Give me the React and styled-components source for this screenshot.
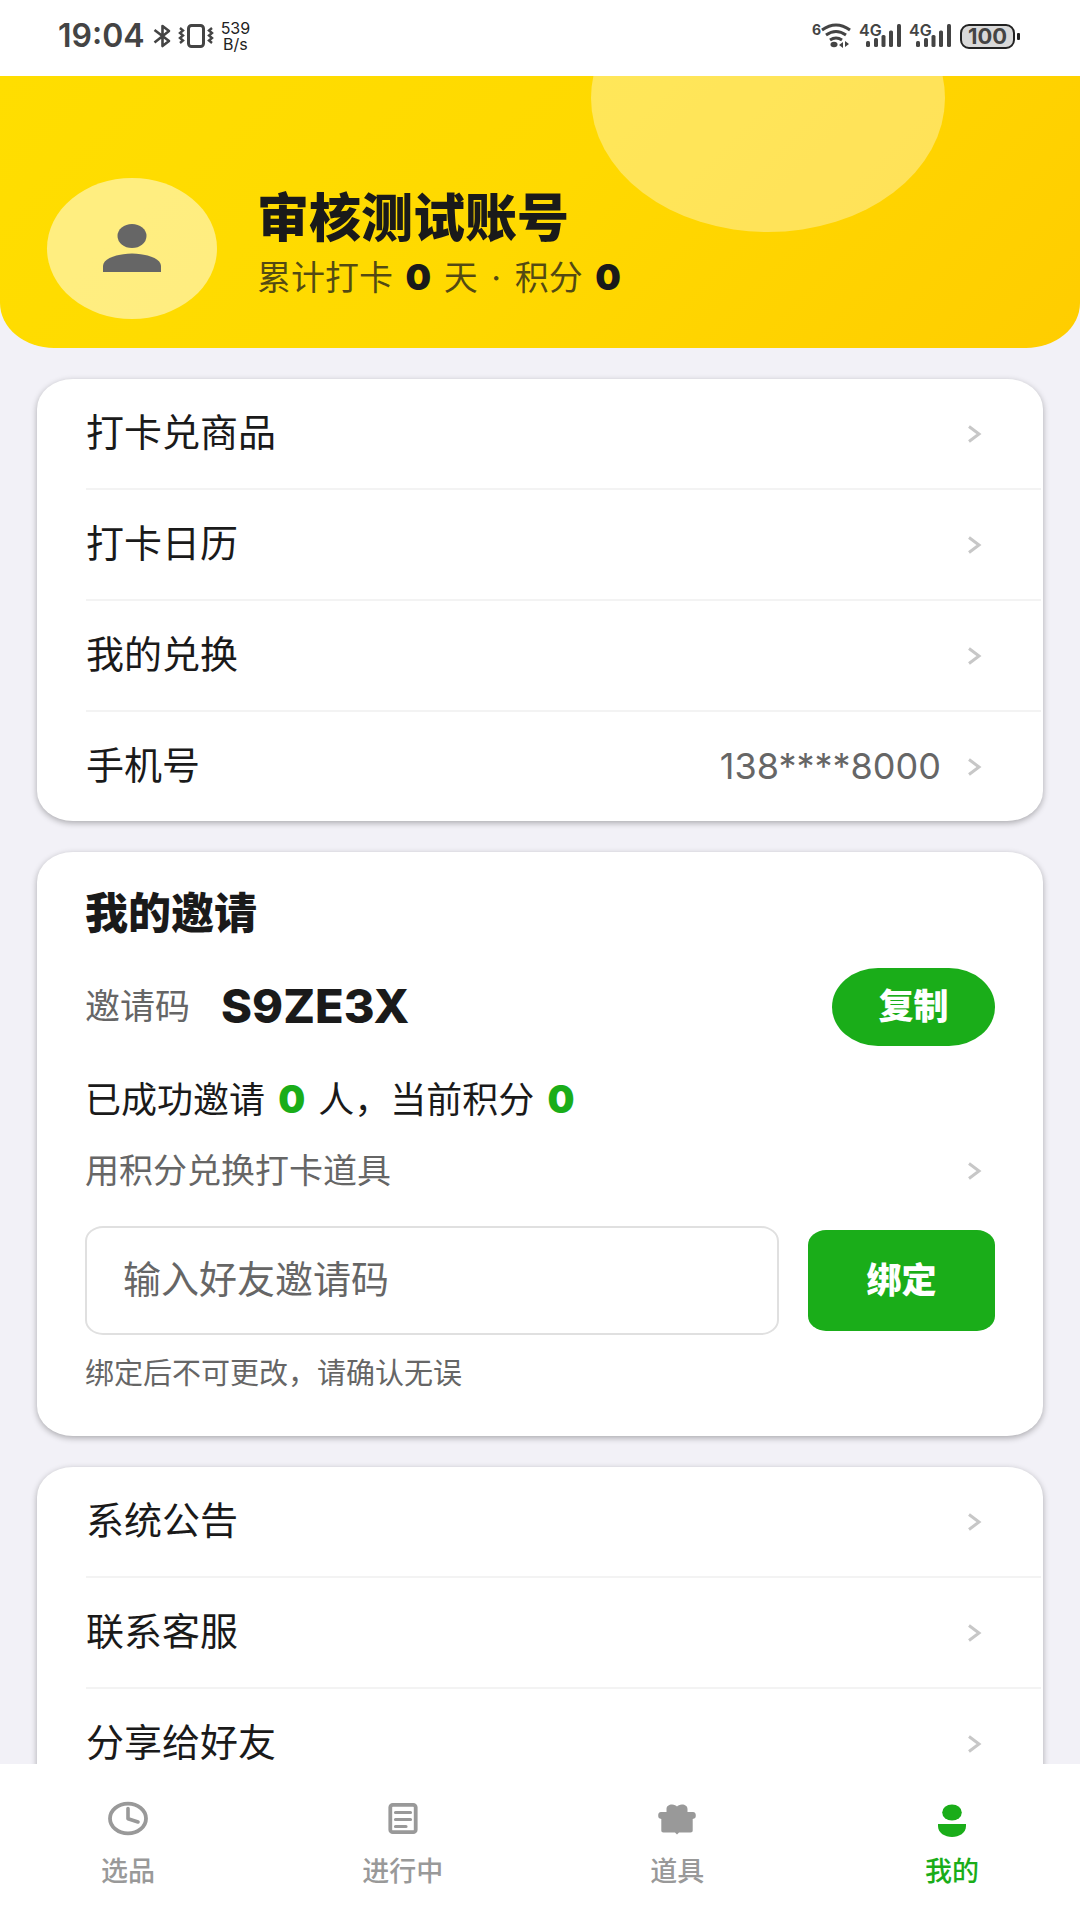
import React, { useState } from "react";
import styled, { createGlobalStyle } from "styled-components";

const GlobalStyle = createGlobalStyle`
  :root {
    --green: #1aad19;
    --text: #1a1a1a;
    --muted: #666;
  }

  * {
    box-sizing: border-box;
  }

  body {
    margin: 0;
    color: var(--text);
    font-family: Inter, "Noto Sans CJK SC", sans-serif;
  }

  a {
    color: inherit;
    text-decoration: none;
  }

  svg {
    display: block;
    flex: none;
    overflow: visible;
  }
`;

const Page = styled.div`
  display: flex;
  flex-direction: column;
  height: 100vh;
  background: #f2f1f7;
`;

const StatusBar = styled.div`
  display: flex;
  justify-content: space-between;
  align-items: center;
  flex: none;
  height: 76px;
  padding: 0 60px 4px 58px;
  background: #fff;
  color: #444;
`;

const StatusGroup = styled.div`
  display: flex;
  align-items: center;
  gap: 8px;
`;

const Time = styled.span`
  font-size: 32px;
  font-weight: 600;
  line-height: 32px;
`;

const Speed = styled.span`
  display: flex;
  flex-direction: column;
  align-items: center;
  font-size: 16px;
  line-height: 16px;
  color: #222;
`;

const Scroll = styled.div`
  flex: 1;
  min-height: 0;
  overflow-y: auto;
  scrollbar-width: none;
`;

const Header = styled.header`
  position: relative;
  display: flex;
  align-items: center;
  gap: 40px;
  height: 272px;
  padding: 72px 47px 0;
  overflow: hidden;
  border-radius: 0 0 54px 54px / 0 0 45px 45px;
  background: linear-gradient(135deg, #ffde00 0%, #ffd900 50%, #ffcd00 100%);
`;

const Bubble = styled.div`
  position: absolute;
  top: -112px;
  right: 135px;
  width: 354px;
  height: 268px;
  border-radius: 50%;
  background: rgba(255, 255, 255, 0.35);
`;

const Avatar = styled.div`
  display: flex;
  align-items: center;
  justify-content: center;
  flex: none;
  width: 170px;
  height: 141px;
  border-radius: 50%;
  background: rgba(255, 255, 255, 0.5);
  color: #666;
`;

const Name = styled.h1`
  margin: 0;
  font-size: 52px;
  font-weight: 900;
  line-height: 58px;
`;

const Summary = styled.p`
  margin: 0;
  font-size: 34px;
  line-height: 58px;
  color: rgba(26, 26, 26, 0.75);

  b {
    margin: 0 3px;
    font-size: 36px;
    font-weight: 900;
    color: var(--text);
  }
`;

const Dot = styled.span`
  margin: 0 4px;
`;

const Content = styled.main`
  display: flex;
  flex-direction: column;
  gap: 31px;
  padding: 31px 37px;
`;

const Card = styled.section`
  padding: ${(props) => (props.$padded ? "31px 48px 40px" : "0")};
  border-radius: 36px / 30px;
  background: #fff;
  box-shadow: 0 2px 6px rgba(0, 0, 0, 0.3);
`;

const Item = styled.a`
  display: flex;
  align-items: center;
  gap: 27px;
  height: 109px;
  margin: 0 2px 0 49px;
  padding-right: 60px;
  font-size: 38px;
  line-height: 48px;

  & + & {
    height: 111px;
    border-top: 2px solid #f3f3f3;
  }
`;

const Label = styled.span`
  flex: 1;
`;

const ItemLabel = styled(Label)`
  padding-bottom: 4px;
`;

const Value = styled.span`
  padding-bottom: 2px;
  font-size: 36px;
  color: var(--muted);
`;

const CardTitle = styled.h2`
  margin: 0;
  font-size: 43px;
  font-weight: 900;
  line-height: 60px;
`;

const CodeRow = styled.div`
  display: flex;
  align-items: center;
  gap: 31px;
  margin-top: 25px;
  line-height: 60px;
`;

const CodeLabel = styled.span`
  padding-bottom: 2px;
  font-size: 35px;
  color: var(--muted);
`;

const Code = styled.strong`
  flex: 1;
  padding-bottom: 2px;
  font-size: 47px;
  font-weight: 800;
`;

const Button = styled.button`
  padding: 0 0 2px;
  border: 0;
  background: var(--green);
  color: #fff;
  font-family: inherit;
  font-size: 35px;
  font-weight: 900;
  line-height: 48px;
`;

const CopyButton = styled(Button)`
  width: 163px;
  height: 78px;
  border-radius: 46px / 39px;
`;

const BindButton = styled(Button)`
  width: 187px;
  height: 101px;
  border-radius: 18px / 15px;
`;

const Stats = styled.p`
  margin: 23px 0 0;
  font-size: 36px;
  line-height: 60px;

  b {
    margin: 0 3px;
    font-size: 38px;
    font-weight: 900;
    color: var(--green);
  }
`;

const ExchangeLink = styled.a`
  display: flex;
  align-items: center;
  margin-top: 11px;
  padding-right: 14px;
  font-size: 34px;
  line-height: 60px;
  color: var(--muted);
`;

const BindForm = styled.form`
  display: flex;
  align-items: center;
  gap: 29px;
  margin-top: 25px;
`;

const CodeInput = styled.input`
  flex: 1;
  min-width: 0;
  height: 109px;
  padding: 0 36px 4px;
  border: 2px solid #e0e0e0;
  border-radius: 18px / 15px;
  background: #fff;
  font-family: inherit;
  font-size: 38px;
  outline: none;

  &::placeholder {
    color: var(--muted);
    opacity: 1;
  }
`;

const Hint = styled.p`
  margin: 17px 0 0;
  font-size: 29px;
  line-height: 44px;
  color: var(--muted);
`;

const TabBar = styled.nav`
  display: flex;
  justify-content: space-between;
  flex: none;
  height: 156px;
  padding: 37px 40px 0;
  background: #fff;
`;

const Tab = styled.a`
  display: flex;
  flex-direction: column;
  align-items: center;
  gap: 17px;
  width: 176px;
  font-size: 27px;
  font-weight: 500;
  line-height: 36px;
  color: ${(props) => (props.$active ? "var(--green)" : "#999")};
`;

const Chevron = () => (
  <svg width="13" height="18" viewBox="0 0 13 18" fill="none" stroke="#c7c7c7" strokeWidth="3">
    <path d="M1 1.5 L11 9 L1 16.5" />
  </svg>
);

const BluetoothIcon = () => (
  <svg width="18" height="24" viewBox="0 0 18 24" fill="none" stroke="currentColor" strokeWidth="2.6">
    <path d="M1.5 6 L16 17 L9.5 22 V2 L16 7 L1.5 18.5" strokeLinejoin="round" />
  </svg>
);

const VibrateIcon = () => (
  <svg width="34" height="24" viewBox="0 0 34 24" fill="none" stroke="currentColor">
    <rect x="9.5" y="1.5" width="15" height="21" rx="3" strokeWidth="3" />
    <path d="M1 4 l3 2.500 l-3 2.500 l3 2.500 l-3 2.500 l3 2.500 l-3 2.500" strokeWidth="2.4" />
    <path d="M33 4 l-3 2.500 l3 2.500 l-3 2.500 l3 2.500 l-3 2.500 l3 2.500" strokeWidth="2.4" />
  </svg>
);

const WifiIcon = () => (
  <svg width="40" height="26" viewBox="0 0 40 26" fill="none" stroke="currentColor" strokeWidth="3">
    <text x="0" y="12" fontSize="14" fontWeight="700" fill="currentColor" stroke="none">
      6
    </text>
    <path d="M10 7 Q24 -3 38 7" />
    <path d="M14 12 Q24 5 34 12" />
    <path d="M18 17 Q24 13 30 17" />
    <ellipse cx="22" cy="21.500" rx="3.500" ry="2.800" fill="currentColor" stroke="none" />
    <path d="M31 19 v6 l-4 -3 z M33 18 v6 l4 -3 z" fill="currentColor" stroke="none" />
  </svg>
);

const SignalIcon = () => (
  <svg width="42" height="24" viewBox="0 0 42 24" fill="currentColor">
    <text x="-1" y="12" fontSize="16" fontWeight="600">
      4G
    </text>
    <rect x="6" y="17" width="4" height="6" rx="1.500" />
    <rect x="14" y="14" width="4" height="9" rx="1.500" />
    <rect x="21.500" y="11" width="4" height="12" rx="1.500" />
    <rect x="29" y="6.500" width="4" height="16.500" rx="1.500" />
    <rect x="37" y="0" width="4" height="23" rx="1.500" />
  </svg>
);

const BatteryIcon = () => (
  <svg width="60" height="25" viewBox="0 0 60 25">
    <rect x="1" y="1" width="53" height="23" rx="8" fill="#d9d9d9" stroke="#222" strokeWidth="2" />
    <rect x="57" y="9" width="3" height="7" rx="1" fill="#222" />
    <text x="27.500" y="20" textAnchor="middle" fontSize="22" fontWeight="700" fill="#444">
      100
    </text>
  </svg>
);

const PersonIcon = () => (
  <svg width="58" height="48" viewBox="0 0 58 48" fill="currentColor">
    <ellipse cx="29" cy="12" rx="14.500" ry="12" />
    <path d="M0 48 V42 C0 34 16 29.500 29 29.500 C42 29.500 58 34 58 42 V48 Z" />
  </svg>
);

const ClockIcon = () => (
  <svg width="40" height="36" viewBox="0 0 40 36" fill="none" stroke="currentColor">
    <ellipse cx="20" cy="17.500" rx="18" ry="14.900" strokeWidth="3.800" />
    <path d="M20 7.500 V17.800 L30 21" strokeWidth="3.600" strokeLinecap="round" strokeLinejoin="round" />
  </svg>
);

const ListIcon = () => (
  <svg width="40" height="36" viewBox="0 0 40 36" fill="none" stroke="currentColor">
    <rect x="7.300" y="3.800" width="25.400" height="27.400" rx="2.500" strokeWidth="3.800" />
    <path d="M12.500 11.500 H27.500 M12.500 18.500 H27.500 M12.500 25.500 H23" strokeWidth="3.200" strokeLinecap="round" />
  </svg>
);

const GiftIcon = () => (
  <svg width="40" height="36" viewBox="0 0 40 36" fill="currentColor">
    <path d="M9.500 11 V8 C9.500 5 12 3.500 15 3.500 C17.500 3.500 19 4.500 20 5.500 C21 4.500 22.500 3.500 25 3.500 C28 3.500 30.500 5 30.500 8 V11 H36 C38 11 38.800 12.300 38.800 14.500 C38.800 16.800 38 17.600 35.700 18 V29.500 C35.700 30.800 35 31.500 33.500 31.500 H22 L20 33.500 L18 31.500 H6.500 C5 31.500 4.300 30.800 4.300 29.500 V18 C2 17.600 1.200 16.800 1.200 14.500 C1.200 12.300 2 11 4 11 Z" />
  </svg>
);

const MineIcon = () => (
  <svg width="40" height="36" viewBox="0 0 40 36" fill="currentColor">
    <ellipse cx="20" cy="11.500" rx="9.800" ry="8" />
    <path d="M6 23 H34 V25 C34 32 27 36 20 36 C13 36 6 32 6 25 Z" />
  </svg>
);

const accountItems = [
  { label: "打卡兑商品" },
  { label: "打卡日历" },
  { label: "我的兑换" },
  { label: "手机号", value: "138****8000" },
];

const serviceItems = [{ label: "系统公告" }, { label: "联系客服" }, { label: "分享给好友" }];

const tabs = [
  { label: "选品", icon: <ClockIcon /> },
  { label: "进行中", icon: <ListIcon /> },
  { label: "道具", icon: <GiftIcon /> },
  { label: "我的", icon: <MineIcon />, active: true },
];

const MenuCard = ({ items }) => (
  <Card>
    {items.map((item) => (
      <Item href="#" key={item.label}>
        <ItemLabel>{item.label}</ItemLabel>
        {item.value && <Value>{item.value}</Value>}
        <Chevron />
      </Item>
    ))}
  </Card>
);

const InviteCard = () => {
  const [code, setCode] = useState("");

  return (
    <Card $padded>
      <CardTitle>我的邀请</CardTitle>
      <CodeRow>
        <CodeLabel>邀请码</CodeLabel>
        <Code>S9ZE3X</Code>
        <CopyButton type="button">复制</CopyButton>
      </CodeRow>
      <Stats>
        已成功邀请 <b>0</b> 人，当前积分 <b>0</b>
      </Stats>
      <ExchangeLink href="#">
        <Label>用积分兑换打卡道具</Label>
        <Chevron />
      </ExchangeLink>
      <BindForm onSubmit={(e) => e.preventDefault()}>
        <CodeInput
          aria-label="输入好友邀请码"
          placeholder="输入好友邀请码"
          value={code}
          onChange={(e) => setCode(e.target.value)}
        />
        <BindButton type="submit">绑定</BindButton>
      </BindForm>
      <Hint>绑定后不可更改，请确认无误</Hint>
    </Card>
  );
};

const App = () => {
  return (
    <Page>
      <GlobalStyle />
      <StatusBar>
        <StatusGroup>
          <Time>19:04</Time>
          <BluetoothIcon />
          <VibrateIcon />
          <Speed>
            <span>539</span>
            <span>B/s</span>
          </Speed>
        </StatusGroup>
        <StatusGroup>
          <WifiIcon />
          <SignalIcon />
          <SignalIcon />
          <BatteryIcon />
        </StatusGroup>
      </StatusBar>
      <Scroll>
        <Header>
          <Bubble />
          <Avatar>
            <PersonIcon />
          </Avatar>
          <div>
            <Name>审核测试账号</Name>
            <Summary>
              累计打卡 <b>0</b> 天 <Dot>·</Dot> 积分 <b>0</b>
            </Summary>
          </div>
        </Header>
        <Content>
          <MenuCard items={accountItems} />
          <InviteCard />
          <MenuCard items={serviceItems} />
        </Content>
      </Scroll>
      <TabBar>
        {tabs.map((tab) => (
          <Tab href="#" key={tab.label} $active={tab.active}>
            {tab.icon}
            {tab.label}
          </Tab>
        ))}
      </TabBar>
    </Page>
  );
};

export default App;
